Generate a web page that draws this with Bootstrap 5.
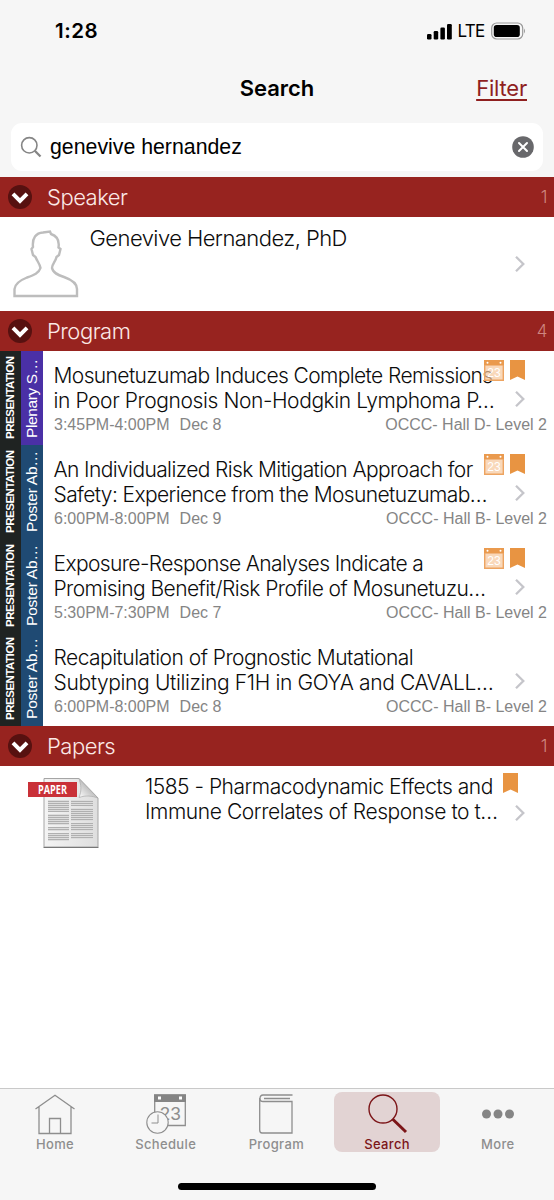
<!DOCTYPE html>
<html lang="en">
<head>
<meta charset="utf-8">
<meta name="viewport" content="width=device-width, initial-scale=1">
<title>Search</title>
<link href="https://cdn.jsdelivr.net/npm/bootstrap@5.3.0/dist/css/bootstrap.min.css" rel="stylesheet">
<style>
body{font-family:Inter,"Liberation Sans",sans-serif;color:#0c0c0c;background:#fff;height:1200px;overflow:hidden}
svg{display:block;flex:none}
.topbar{background:#f6f6f6;height:177px}
.status{height:62px;padding:0 28px 0 55px}
.clock{font-size:20.5px;font-weight:600;line-height:62px;letter-spacing:.5px;color:#000}
.lte{font-size:17px;line-height:62px;letter-spacing:-.7px;color:#000;margin-left:5px}
.battery{margin-left:4.500px}
.titlebar{height:61px;padding-top:10px}
.titlebar .ttl{font-size:22px;font-weight:600;line-height:32px;color:#000}
.filter{font-size:22px;line-height:32px;letter-spacing:-.2px;color:#8f1f1f;right:27px;top:10px;text-underline-offset:3px;text-decoration-thickness:1.5px;text-decoration-skip-ink:none}
.searchbox{height:48px;margin:0 11px;border-radius:11px;padding:0 9px}
.query{font:21.3px/46px "Liberation Sans",sans-serif;color:#000}
.sect{height:40px;background:#97231f;color:#fbe9e6;padding:0 7px 0 8px;font-weight:300;font-size:22px;line-height:40px;letter-spacing:-.5px;gap:15px}
.sect .cnt{font-size:17px;color:#cf8680}
.light{font-weight:300;font-size:21px;line-height:25px;white-space:nowrap}
.speaker{height:94px}
.avatar{margin:13px 0 0 13px}
.name{font-size:22px;letter-spacing:-.56px;margin:9px 0 0 10.5px}
.prow{height:94px}
.prow.final{height:93px}
.details{padding:12px 7px 0 10.5px}
.k1{letter-spacing:-.61px}.k2{letter-spacing:-.415px}.k3{letter-spacing:-.53px}.k4{letter-spacing:-.37px}.k5{letter-spacing:-.49px}.k6{letter-spacing:-.57px}.k7{letter-spacing:-.43px}
.strip{writing-mode:vertical-rl;transform:rotate(180deg);color:#fff;white-space:nowrap}
.kind{width:21px;background:#1f2322;font:bold 11.5px/21px "Liberation Sans",sans-serif;letter-spacing:-.48px;padding-top:6px}
.cat{width:22px;background:#1f4a73;font:15.5px/22px "Liberation Sans",sans-serif;padding-top:7px}
.cat.poster{letter-spacing:-.2px}
.cat.plenary{background:#4a30a6;letter-spacing:-.4px}
.meta{font:16px/20px "Liberation Sans",sans-serif;color:#858585;padding:2px 0 0 .5px;gap:10px}
.cal{left:484px;top:9px}.bm{left:510px;top:9px}.chev{left:514px;top:38.500px}
.speaker .chev{top:38px}
.paper{height:94px}
.paper .bm{left:503px;top:7px}.paper .chev{top:38px}
.papericon{margin:9px 0 0 28px}
.papertitle{padding:8px 0 0 45px}
.tabs{height:112px;background:#f6f6f6;border-top:1px solid #c9c9c9;padding-top:3px}
.tab{width:106px;height:60px;font-size:13px;line-height:17px;font-weight:500;color:#8e8e8e;border-radius:8px;letter-spacing:.35px}
.tabrow{gap:4.700px;padding-left:2px}
.tab.on{background:#e2d3d3;color:#7c1518}
.pill{width:198px;height:7px;border-radius:4px;background:#000;margin:31px auto 0}
</style>
</head>
<body class="d-flex flex-column">
<svg width="0" height="0" class="position-absolute"><defs>
<symbol id="down" viewBox="0 0 24 24"><circle cx="12" cy="12" r="12" fill="#571110"/><path d="M5 8.800 12 15.800 19 8.800" fill="none" stroke="#fff" stroke-width="4"/></symbol>
<symbol id="chevr" viewBox="0 0 12 18"><path d="M2 1.800 9.300 9 2 16.200" fill="none" stroke="#c5c5ca" stroke-width="2.300"/></symbol>
<symbol id="mark" viewBox="0 0 15 20"><path d="M0 0H15V20L7.500 16.500 0 20Z" fill="#e89442"/></symbol>
<symbol id="cal" viewBox="0 0 20 21"><path d="M0 0H20V21H0Z" fill="#f6c79c" fill-opacity=".7"/><path d="M0 0H20V5.500H0Z" fill="#e89442" fill-opacity=".9"/><path d="M.7 5V20.300H19.300V5" fill="none" stroke="#eda461" stroke-width="1.400"/><circle cx="3.500" cy="2.800" r="1" fill="#fff"/><circle cx="16.500" cy="2.800" r="1" fill="#fff"/><text x="10" y="17" text-anchor="middle" font-family="Liberation Sans" font-size="12" fill="#fff">23</text></symbol>
</defs></svg>
<header class="topbar">
  <div class="status d-flex justify-content-between align-items-center">
    <span class="clock">1:28</span>
    <div class="d-flex align-items-center">
      <svg width="25" height="17" viewBox="0 0 25 17"><rect x="0" y="11" width="4.500" height="5.500" rx="1.200"/><rect x="6.700" y="8" width="4.500" height="8.500" rx="1.200"/><rect x="13.400" y="4.500" width="4.500" height="12" rx="1.200"/><rect x="20" y="1" width="4.800" height="15.500" rx="1.200"/></svg>
      <span class="lte">LTE</span>
      <svg class="battery" width="37" height="18" viewBox="0 0 37 18"><rect x="2.700" y="1" width="31" height="16" rx="5" fill="none" stroke="#999" stroke-width="1.200"/><rect x="4.800" y="3" width="26" height="12" rx="2.800"/><path d="M35 6.500Q37 9 35 11.500Z" fill="#999"/></svg>
    </div>
  </div>
  <div class="titlebar position-relative text-center"><span class="ttl">Search</span><a class="filter position-absolute" href="#">Filter</a></div>
  <div class="searchbox bg-white d-flex align-items-center">
    <svg width="22" height="22" viewBox="0 0 22 22" fill="none" stroke="#858585"><circle cx="9.300" cy="9.300" r="7.700" stroke-width="1.600"/><path d="M14.800 14.800 20.500 20.500" stroke-width="2.300"/></svg>
    <span class="query flex-grow-1 ps-2">genevive hernandez</span>
    <svg width="22" height="22" viewBox="0 0 22 22"><circle cx="11" cy="11" r="10.800" fill="#68686b"/><path d="M7 7 15 15M15 7 7 15" stroke="#fff" stroke-width="2" stroke-linecap="round"/></svg>
  </div>
</header>
<main class="flex-grow-1">
  <div class="sect d-flex align-items-center"><svg width="24" height="24"><use href="#down"/></svg><span class="flex-grow-1">Speaker</span><span class="cnt">1</span></div>
  <div class="speaker position-relative d-flex">
    <svg class="avatar" width="66" height="68" viewBox="0 0 66 68"><path d="M1.500 66V59C2 53 9 49.500 14 47.500 21 45 26 43 27.500 38 27 34 24 31 22.500 27L20 25 18.500 19 20 17C19 8 23 3 30 2.500L37 1.500 38 4C44 6 46.500 11 45.500 17.500L47.500 19 46 25 43.500 27C42.500 32 39 34 39 38 40 43 45 45 51 47 58 49.500 64 53 64 59V66Z" fill="none" stroke="#bdbdbd" stroke-width="2.400"/></svg>
    <div class="light name">Genevive Hernandez, PhD</div>
    <svg class="chev position-absolute" width="12" height="18"><use href="#chevr"/></svg>
  </div>
  <div class="sect d-flex align-items-center"><svg width="24" height="24"><use href="#down"/></svg><span class="flex-grow-1">Program</span><span class="cnt">4</span></div>
  <div class="prow position-relative d-flex">
    <div class="strip kind">PRESENTATION</div><div class="strip cat plenary">Plenary S…</div>
    <div class="light details flex-grow-1"><div class="k1">Mosunetuzumab Induces Complete Remissions</div><div class="k2">in Poor Prognosis Non-Hodgkin Lymphoma P…</div>
      <div class="meta d-flex"><span>3:45PM-4:00PM</span><span>Dec 8</span><span class="ms-auto">OCCC- Hall D- Level 2</span></div></div>
    <svg class="cal position-absolute" width="20" height="21"><use href="#cal"/></svg><svg class="bm position-absolute" width="15" height="20"><use href="#mark"/></svg><svg class="chev position-absolute" width="12" height="18"><use href="#chevr"/></svg>
  </div>
  <div class="prow position-relative d-flex">
    <div class="strip kind">PRESENTATION</div><div class="strip cat poster">Poster Ab…</div>
    <div class="light details flex-grow-1"><div class="k1">An Individualized Risk Mitigation Approach for</div><div class="k1">Safety: Experience from the Mosunetuzumab…</div>
      <div class="meta d-flex"><span>6:00PM-8:00PM</span><span>Dec 9</span><span class="ms-auto">OCCC- Hall B- Level 2</span></div></div>
    <svg class="cal position-absolute" width="20" height="21"><use href="#cal"/></svg><svg class="bm position-absolute" width="15" height="20"><use href="#mark"/></svg><svg class="chev position-absolute" width="12" height="18"><use href="#chevr"/></svg>
  </div>
  <div class="prow position-relative d-flex">
    <div class="strip kind">PRESENTATION</div><div class="strip cat poster">Poster Ab…</div>
    <div class="light details flex-grow-1"><div class="k1">Exposure-Response Analyses Indicate a</div><div class="k6">Promising Benefit/Risk Profile of Mosunetuzu…</div>
      <div class="meta d-flex"><span>5:30PM-7:30PM</span><span>Dec 7</span><span class="ms-auto">OCCC- Hall B- Level 2</span></div></div>
    <svg class="cal position-absolute" width="20" height="21"><use href="#cal"/></svg><svg class="bm position-absolute" width="15" height="20"><use href="#mark"/></svg><svg class="chev position-absolute" width="12" height="18"><use href="#chevr"/></svg>
  </div>
  <div class="prow final position-relative d-flex">
    <div class="strip kind">PRESENTATION</div><div class="strip cat poster">Poster Ab…</div>
    <div class="light details flex-grow-1"><div class="k3">Recapitulation of Prognostic Mutational</div><div class="k4">Subtyping Utilizing F1H in GOYA and CAVALL…</div>
      <div class="meta d-flex"><span>6:00PM-8:00PM</span><span>Dec 8</span><span class="ms-auto">OCCC- Hall B- Level 2</span></div></div>
    <svg class="chev position-absolute" width="12" height="18"><use href="#chevr"/></svg>
  </div>
  <div class="sect d-flex align-items-center"><svg width="24" height="24"><use href="#down"/></svg><span class="flex-grow-1">Papers</span><span class="cnt">1</span></div>
  <div class="paper position-relative d-flex">
    <svg class="papericon" width="72" height="74" viewBox="0 0 72 74">
      <defs><linearGradient id="sheet" x1="0" x2="1"><stop offset="0" stop-color="#f4f4f4"/><stop offset="1" stop-color="#dedede"/></linearGradient>
      <linearGradient id="fold" x1="0" y1="1" x2="1" y2="0"><stop offset="0" stop-color="#fff"/><stop offset=".55" stop-color="#bbb"/><stop offset="1" stop-color="#999"/></linearGradient>
      <pattern id="lines" width="22" height="2" patternUnits="userSpaceOnUse"><path d="M0 .5H22" stroke="#b0b0b0" stroke-width="1"/></pattern></defs>
      <path d="M16 3.500H51L70 23V72H16Z" fill="url(#sheet)" stroke="#a5a5a5"/><path d="M15.500 72.500H70.500" stroke="#777"/>
      <path d="M51 3.500C53 10 54 15 51 22.500 58 20 64 21 70 23L51 3.500Z" fill="url(#fold)" stroke="#aaa" stroke-width=".7"/>
      <path d="M20 25H41V37H20ZM20 39H41V50H20ZM20 52H41V56H20ZM20 58H41V66H20ZM43 25H65V31H43ZM43 33H65V46H43ZM43 48H65V56H43ZM43 58H65V64H43Z" fill="#ddd"/>
      <path d="M20 25H41V37H20ZM20 39H41V50H20ZM20 52H41V56H20ZM20 58H41V66H20ZM43 25H65V31H43ZM43 33H65V46H43ZM43 48H65V56H43ZM43 58H65V64H43Z" fill="url(#lines)"/>
      <rect x="0" y="7" width="49" height="15" fill="#c93138"/><text x="24.500" y="18.800" text-anchor="middle" font-family="Open Sans" font-size="12" font-weight="700" fill="#fff" textLength="29" lengthAdjust="spacingAndGlyphs">PAPER</text>
    </svg>
    <div class="light papertitle"><div class="k5">1585 - Pharmacodynamic Effects and</div><div class="k7">Immune Correlates of Response to t…</div></div>
    <svg class="bm position-absolute" width="15" height="20"><use href="#mark"/></svg><svg class="chev position-absolute" width="12" height="18"><use href="#chevr"/></svg>
  </div>
</main>
<nav class="tabs">
  <div class="tabrow d-flex">
    <div class="tab d-flex flex-column align-items-center"><svg width="42" height="44" viewBox="0 0 42 44" fill="none" stroke="#8e8e8e" stroke-width="1.300"><path d="M1.500 17 21 3.200 40.500 17M5 15V41.500H37V15M15.500 41.500V26.500H26.500V41.500"/></svg>Home</div>
    <div class="tab d-flex flex-column align-items-center"><svg width="42" height="44" viewBox="0 0 42 44" fill="none" stroke="#8e8e8e"><path d="M9.700 3V33.500H40.300V3Z" stroke-width="1.300"/><path d="M9 2.500H41V10H9Z" fill="#858585" stroke="none"/><path d="M13 4.500h3v3h-3zM34 4.500h3v3h-3z" fill="#fff" stroke="none"/><text x="25.500" y="27.500" text-anchor="middle" font-family="Liberation Sans" font-size="18.500" fill="#8e8e8e" stroke="none">23</text><circle cx="12.500" cy="30.500" r="10.700" fill="#f6f6f6" stroke-width="1.100"/><path d="M13 22.500V31H6.500"/></svg>Schedule</div>
    <div class="tab d-flex flex-column align-items-center"><svg width="36" height="44" viewBox="0 0 36 44" fill="none" stroke="#8e8e8e" stroke-width="1.300"><path d="M34.500 3H5C1 3 1 9.500 5 9.500H34V41H4Q1.700 41 1.700 38V6M6 6.500H32"/></svg>Program</div>
    <div class="tab on d-flex flex-column align-items-center"><svg width="42" height="44" viewBox="0 0 42 44" fill="none" stroke="#7c1518"><circle cx="17" cy="17" r="14" stroke-width="1.400"/><path d="M26.500 27 40 40" stroke-width="3"/></svg>Search</div>
    <div class="tab d-flex flex-column align-items-center"><svg width="34" height="44" viewBox="0 0 34 44" fill="#858585"><circle cx="5.500" cy="22" r="4.500"/><circle cx="17" cy="22" r="4.500"/><circle cx="28.500" cy="22" r="4.500"/></svg>More</div>
  </div>
  <div class="pill"></div>
</nav>
<script src="https://cdn.jsdelivr.net/npm/bootstrap@5.3.0/dist/js/bootstrap.bundle.min.js"></script>
</body>
</html>
